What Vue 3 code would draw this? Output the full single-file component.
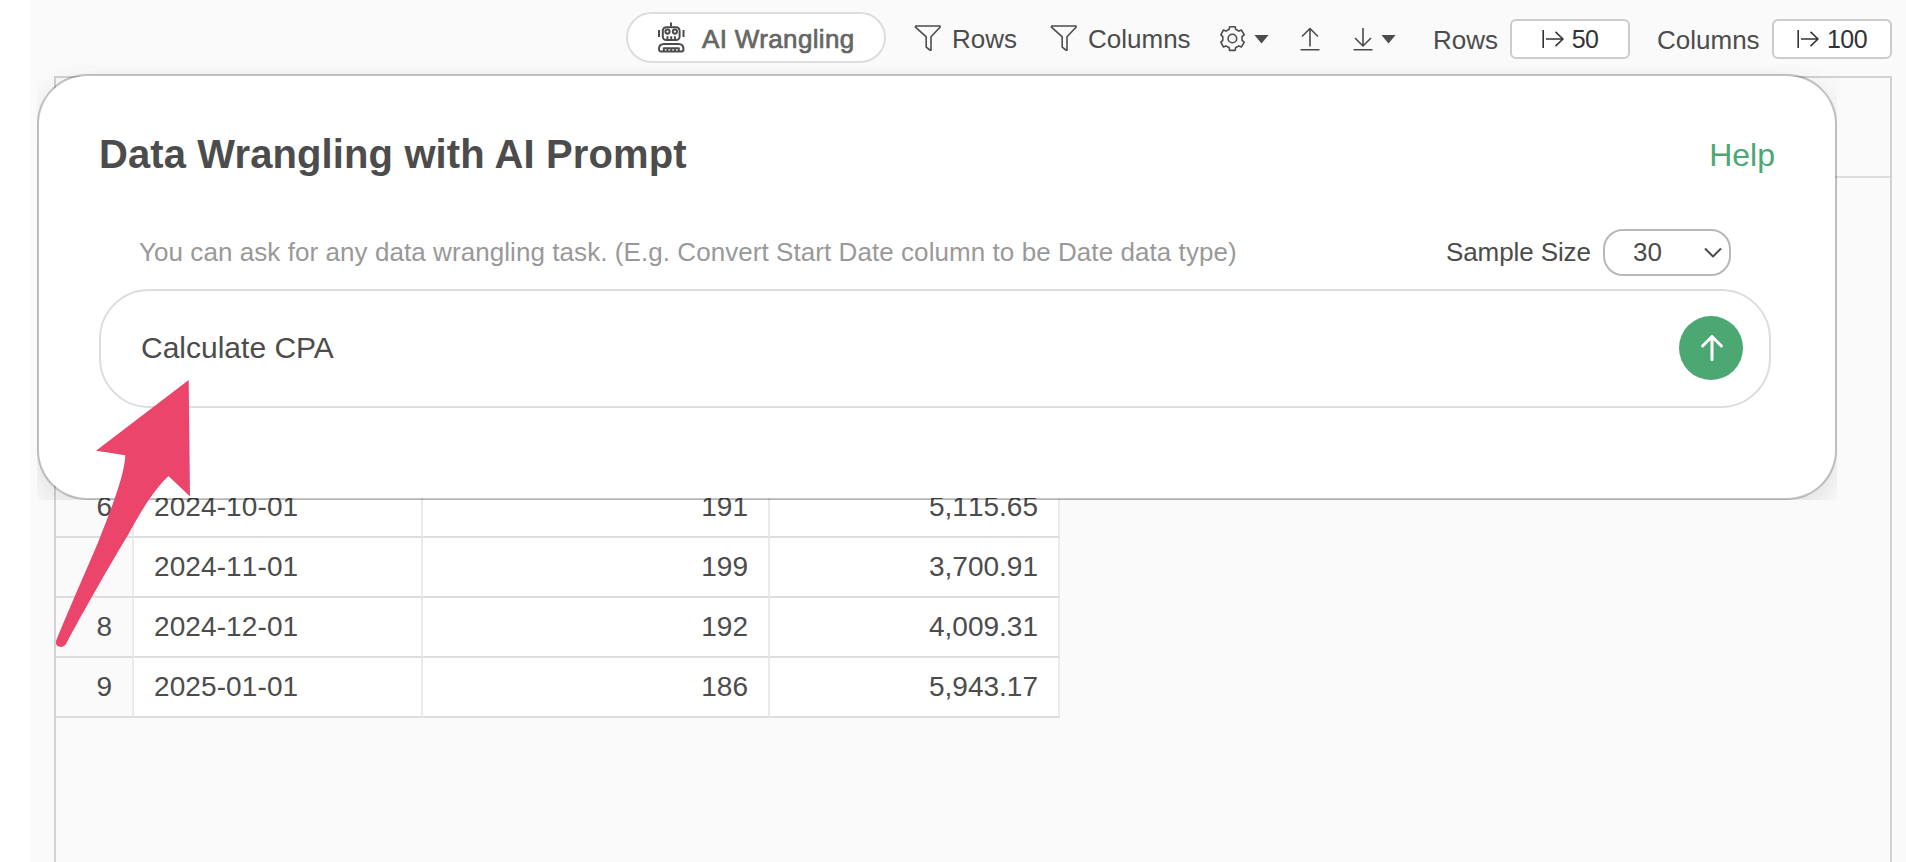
<script setup>
import { ref } from "vue";

const prompt = ref("Calculate CPA");

// rows scrolled out under the dialog are skipped by the spacer
const rows = [
  { no: "6", date: "2024-10-01", count: "191", cost: "5,115.65" },
  { no: "", date: "2024-11-01", count: "199", cost: "3,700.91" },
  { no: "8", date: "2024-12-01", count: "192", cost: "4,009.31" },
  { no: "9", date: "2025-01-01", count: "186", cost: "5,943.17" },
];

const filters = ["Rows", "Columns"];
const limits = [
  { label: "Rows", value: "50" },
  { label: "Columns", value: "100" },
];
</script>

<template>
  <div class="page">
    <header class="toolbar">
      <button class="ai-btn">
        <svg class="robot" width="28" height="32" viewBox="0 0 28 32">
          <path d="M14 .5v4M2 8v7M26.500 8v7" />
          <rect x="5.800" y="5.200" width="16.800" height="12.800" rx="3.500" />
          <circle cx="10.500" cy="9.600" r="2.100" />
          <circle cx="17.900" cy="9.600" r="2.100" />
          <path d="M10.500 14.200v3.500M14.200 14.200v3.500M17.900 14.200v3.500" />
          <path d="M7 22h14.500c3.300 0 5 2.200 5 5 0 1.700-.7 2.400-2 2.400H4c-1.300 0-2-.7-2-2.400 0-2.800 1.700-5 5-5z" />
          <path d="M6.800 29v-2.800h15V29M10.500 26.500V29M14.200 26.500V29M17.900 26.500V29" />
        </svg>
        <span>AI Wrangling</span>
      </button>

      <div v-for="name in filters" :key="name" class="filter" :class="name.toLowerCase()">
        <svg width="28" height="28" viewBox="0 0 28 28">
          <path d="M1.500 2h24.500v1.200L17 12.800V26.200L15.800 26l-3.600-2.800V12.800L1.500 3.200z" />
        </svg>
        <span>{{ name }}</span>
      </div>

      <div class="tool gear">
        <svg width="26" height="26" viewBox="0 0 26 26">
          <g transform="translate(-.6 -.5)">
            <path
              d="M10.210 1.300L15.790 1.300 16.190 3.730 19.430 5.600 22.070 4.540 24.860 9.370 22.620 11.130V14.870L24.860 16.630 22.070 21.460 19.430 20.400 16.190 22.270 15.790 24.900H10.210L9.810 22.270 6.570 20.400 3.930 21.460 1.500 16.630 3.380 14.870V11.130L1.500 9.370 3.930 4.540 6.570 5.600 9.810 3.730z"
            />
            <circle cx="13" cy="13" r="4.300" />
          </g>
        </svg>
        <i class="caret"></i>
      </div>
      <div class="tool upload">
        <svg width="20" height="24" viewBox="0 0 20 24">
          <path d="M.5 22.700h19M10 19.500V1.500M2 9.500l8-8 8 8" />
        </svg>
      </div>
      <div class="tool download">
        <svg width="20" height="24" viewBox="0 0 20 24">
          <path d="M.5 22.700h19M10 1v18M2 11l8 8 8-8" />
        </svg>
        <i class="caret"></i>
      </div>

      <label v-for="item in limits" :key="item.label" class="limit" :class="item.label.toLowerCase()">
        <span>{{ item.label }}</span>
        <span class="limit-box">
          <svg width="22" height="20" viewBox="0 0 22 20">
            <path d="M1.200 1v18M4 10h17M13.500 2.800L21 10l-7.500 7.200" />
          </svg>
          {{ item.value }}
        </span>
      </label>
    </header>

    <main class="grid">
      <div class="grid-head"></div>
      <div class="spacer"></div>
      <div v-for="row in rows" :key="row.date" class="row">
        <div class="cell no">{{ row.no }}</div>
        <div class="cell date">{{ row.date }}</div>
        <div class="cell count">{{ row.count }}</div>
        <div class="cell cost">{{ row.cost }}</div>
      </div>
    </main>

    <section class="dialog">
      <div class="dialog-head">
        <h1>Data Wrangling with AI Prompt</h1>
        <a class="help">Help</a>
      </div>
      <div class="hint-row">
        <span class="hint">You can ask for any data wrangling task. (E.g. Convert Start Date column to be Date data type)</span>
        <span class="sample">Sample Size</span>
        <div class="select">
          <span>30</span>
          <svg width="18" height="12" viewBox="0 0 18 12"><path d="M1 1.500l8 8 8-8" /></svg>
        </div>
      </div>
      <div class="prompt">
        <span>{{ prompt }}</span>
        <button class="send">
          <svg width="24" height="28" viewBox="0 0 24 28"><path d="M12 25.500V2.500M2.600 12L12 2.500 21.400 12" /></svg>
        </button>
      </div>
    </section>

    <svg class="pointer" width="150" height="280" viewBox="0 0 150 280">
      <path
        d="M138.700 10L140 126.500 118.500 106C107 117 96 132 78 165C58 198 33 242 16 274C13 279.500 4.500 277 6 271C22 232 39 194 49 170C62 137 74.500 105 75.300 85.200L46 80.700z"
      />
    </svg>
  </div>
</template>

<style>
body {
  margin: 0;
  background: #fff;
}
</style>

<style scoped>
.page {
  position: relative;
  box-sizing: border-box;
  width: 1906px;
  height: 862px;
  padding-left: 30px;
  background: linear-gradient(to right, #fff 30px, #fafafa 30px);
  overflow: hidden;
  color: #4c4c4c;
  font-family: "Liberation Sans", Arial, sans-serif;
  font-size: 26px;
}

.page * {
  box-sizing: border-box;
}

svg {
  display: block;
  flex: none;
  fill: none;
  stroke: #4c4c4c;
  stroke-width: 1.6;
  stroke-linejoin: round;
}

button {
  padding: 0;
  font: inherit;
  color: inherit;
}

.toolbar {
  display: flex;
  align-items: center;
  height: 76px;
  padding-left: 596px;
  line-height: 30px;
  white-space: nowrap;
}

.ai-btn {
  display: flex;
  align-items: center;
  flex: none;
  width: 260px;
  height: 51px;
  margin: -1px 28px 0 0;
  padding-left: 29px;
  border: 2px solid #ddd;
  border-radius: 26px;
  background: #fff;
  color: #666;
}

.ai-btn span {
  margin: 3px 0 0 17px;
  letter-spacing: 0.35px;
  -webkit-text-stroke: 0.7px #666;
}

.robot {
  margin-top: 1px;
  stroke-width: 2;
}

.filter {
  display: flex;
  align-items: center;
  flex: none;
  gap: 10px;
  width: 136px;
}

.filter span {
  margin-top: 2px;
}

.filter.columns {
  width: 170px;
}

.tool {
  display: flex;
  align-items: center;
  flex: none;
  gap: 8px;
  margin-top: 2px;
}

.gear {
  width: 80px;
}

.upload {
  width: 53px;
}

.download {
  width: 80px;
}

.caret {
  width: 15px;
  height: 9px;
  background: #4c4c4c;
  clip-path: polygon(0 0, 100% 0, 50% 100%);
}

.limit {
  display: flex;
  align-items: center;
  justify-content: space-between;
  flex: none;
  width: 197px;
  margin-top: 3px;
}

.limit.columns {
  width: 235px;
  margin-left: 27px;
}

.limit-box {
  display: flex;
  align-items: center;
  justify-content: center;
  gap: 8px;
  width: 120px;
  height: 40px;
  margin-top: -1px;
  border: 2px solid #ccc;
  border-radius: 6px;
  background: #fff;
  color: #333;
  font-size: 25px;
  letter-spacing: -0.6px;
}

.limit-box svg {
  stroke: #333;
}

.grid {
  width: 1838px;
  height: 800px;
  margin-left: 24px;
  border: 2px solid #d2d2d2;
}

.grid-head {
  height: 100px;
  border-bottom: 2px solid #ddd;
}

.spacer {
  width: 1004px;
  height: 300px;
  background: #fff;
}

.row {
  display: grid;
  grid-template-columns: 78px 289px 347px 290px;
  width: 1004px;
  height: 60px;
  background: #fff;
  font-size: 28px;
  font-kerning: none;
  line-height: 58px;
}

.cell {
  padding: 0 20px;
  border-right: 2px solid #ebebeb;
  border-bottom: 2px solid #ddd;
  text-align: right;
}

.cell.no {
  background: #fafafa;
}

.cell.date {
  text-align: left;
  letter-spacing: 0.1px;
}

/* sits over the toolbar edge and the grid */
.dialog {
  position: absolute;
  top: 74px;
  left: 37px;
  width: 1800px;
  height: 426px;
  padding: 0 60px;
  border: 2px solid rgba(0, 0, 0, 0.22);
  border-radius: 50px;
  background: #fff;
  background-clip: padding-box;
  box-shadow: 0 10px 30px rgba(0, 0, 0, 0.11);
  clip-path: inset(-9px 0 0 0);
}

.dialog-head {
  display: flex;
  align-items: center;
  justify-content: space-between;
  height: 153px;
  padding-top: 2px;
}

h1 {
  margin: 0;
  font-size: 40px;
  letter-spacing: 0.11px;
  line-height: 48px;
}

.help {
  margin-top: 3px;
  color: #4ba873;
  font-size: 32px;
}

.hint-row {
  display: flex;
  align-items: center;
  height: 48px;
  padding: 0 0 1px 40px;
  white-space: nowrap;
}

.hint {
  width: 1307px;
  color: #999;
  letter-spacing: 0.065px;
}

.sample {
  width: 157px;
  letter-spacing: -0.1px;
}

.select {
  display: flex;
  align-items: center;
  justify-content: space-between;
  width: 128px;
  height: 47px;
  padding: 0 7px 0 28px;
  border: 2px solid #b8b8b8;
  border-radius: 20px;
}

.select svg {
  stroke-width: 2;
}

.prompt {
  display: flex;
  align-items: center;
  justify-content: space-between;
  width: 1672px;
  height: 119px;
  margin-top: 12px;
  padding: 0 26px 1px 40px;
  border: 2px solid #ddd;
  border-radius: 50px;
  font-size: 30px;
}

.send {
  display: flex;
  align-items: center;
  justify-content: center;
  width: 64px;
  height: 64px;
  border: 0;
  border-radius: 50%;
  background: #4ba873;
}

.send svg {
  margin-left: 2px;
  stroke: #fff;
  stroke-width: 3;
  stroke-linecap: round;
}

.pointer {
  position: absolute;
  top: 370px;
  left: 50px;
}

.pointer path {
  fill: #eb456c;
  stroke: none;
}
</style>
